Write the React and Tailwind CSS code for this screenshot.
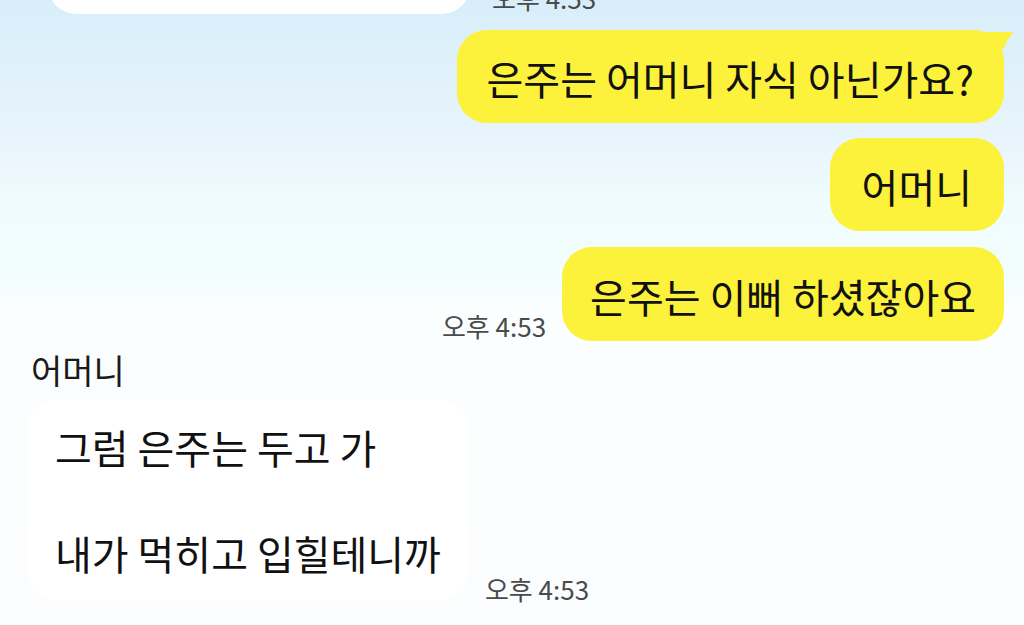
export default function App() {
  const font = { fontFamily: '"Noto Sans CJK KR", "Noto Sans", sans-serif' };
  const ts = "오후 4:53";
  return (
    <div
      className="w-[1024px] h-[625px] overflow-hidden bg-[linear-gradient(to_bottom,#d7eefa_0%,#e2f2fb_14%,#ecf6fc_26%,#effcfd_32%,#f2fdfd_44%,#fbfeff_50%,#fafcfe_100%)] text-[#111]"
      style={font}
    >
      {/* top partial row */}
      <div className="h-[14px] overflow-hidden flex items-end pl-[48px] gap-[22px]">
        <div className="w-[422px] h-[60px] shrink-0 rounded-[28px] bg-white" />
        <div className="text-[26px] leading-[26px] text-[#4a4a4a] mb-[3px]">{ts}</div>
      </div>

      {/* my bubbles */}
      <div className="flex flex-col items-end pr-[20px] mt-[16px] gap-[15px]">
        <div className="relative">
          <div className="rounded-[30px] bg-[#fdf23b] h-[93px] px-[30px] flex items-center text-[40px] leading-[53px] pt-[4px]">
            은주는 어머니 자식 아닌가요?
          </div>
          <svg className="absolute -right-[10px] top-[0px]" width="30" height="30" viewBox="0 0 30 30">
            <path d="M2 2 L18 2 Q24 1 30 3 Q23 8 20 18 L4 22 Z" fill="#fdf23b" />
          </svg>
        </div>
        <div className="rounded-[30px] bg-[#fdf23b] h-[93px] px-[32px] flex items-center text-[40px] leading-[53px] pt-[4px]">
          어머니
        </div>
        <div className="flex items-end gap-[16px] mt-[1px]">
          <div className="text-[26px] leading-[26px] text-[#4a4a4a] mb-[2px]">{ts}</div>
          <div className="rounded-[30px] bg-[#fdf23b] h-[94px] px-[28px] flex items-center text-[40px] leading-[53px] pt-[4px]">
            은주는 이뻐 하셨잖아요
          </div>
        </div>
      </div>

      {/* other side */}
      <div className="pl-[31px] mt-[9px] text-[34px] leading-[40px] text-[#1a1a1a]">어머니</div>
      <div className="flex items-end pl-[28px] mt-[10px] gap-[17px]">
        <div className="rounded-[28px] bg-white px-[27px] py-[21px] text-[40px] leading-[53px] whitespace-pre">
          {"그럼 은주는 두고 가\n\n내가 먹히고 입힐테니까"}
        </div>
        <div className="text-[26px] leading-[26px] text-[#4a4a4a] mb-[-1px]">{ts}</div>
      </div>
    </div>
  );
}
